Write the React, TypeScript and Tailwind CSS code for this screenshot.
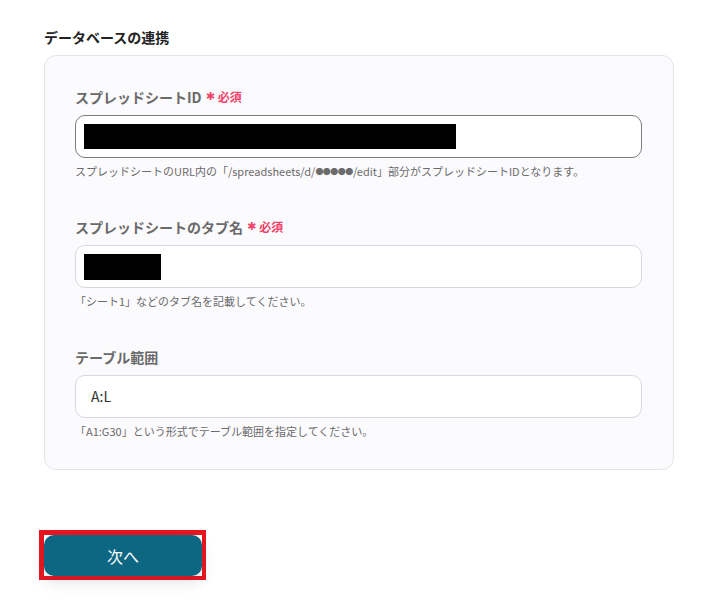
import React from "react";

const font = { fontFamily: '"Noto Sans CJK JP", "Noto Sans", sans-serif' };

function Label({ text, required }: { text: string; required?: boolean }) {
  return (
    <div className="flex items-center h-[20px] text-[14px] font-bold text-[#6a6a6a] leading-[20px]">
      <span>{text}</span>
      {required && (
        <span className="ml-[4px] flex items-center text-[12px] text-[#f0436a] font-bold">
          <span className="text-[11px] mr-[3px] leading-[20px] font-normal" style={{ fontFamily: '"DejaVu Sans", sans-serif' }}>✱</span>必須
        </span>
      )}
    </div>
  );
}

function Help({ children }: { children: React.ReactNode }) {
  return <div className="mt-[5px] h-[16px] overflow-visible text-[11px] leading-[16px] text-[#6b6b6b] whitespace-nowrap">{children}</div>;
}

export default function App() {
  return (
    <div className="w-[728px] h-[612px] bg-white relative" style={font}>
      <div className="pl-[44px] pt-[27px]">
        <div className="text-[14px] font-bold leading-[20px] text-[#222]">データベースの連携</div>
        <div className="mt-[8px] w-[630px] rounded-[12px] border border-[#e3e3ea] bg-[#fbfafd] pl-[30px] pr-[31px] pt-[31px] pb-[30px]">
          <Label text="スプレッドシートID" required />
          <div className="mt-[8px] h-[43px] rounded-[10px] border border-[#7c7c80] bg-white flex items-center pl-[8px]">
            <div className="w-[372px] h-[25px] bg-black" />
          </div>
          <Help>
            スプレッドシートのURL内の「/spreadsheets/d/
            <span className="text-[8px] leading-[0] tracking-[-0.5px] align-[1px]">●●●●●</span>
            /edit」部分がスプレッドシートIDとなります。
          </Help>

          <div className="mt-[38px]">
            <Label text="スプレッドシートのタブ名" required />
          </div>
          <div className="mt-[8px] h-[43px] rounded-[10px] border border-[#d8d8e0] bg-white flex items-center pl-[8px]">
            <div className="w-[77px] h-[26px] bg-black" />
          </div>
          <Help>「シート1」などのタブ名を記載してください。</Help>

          <div className="mt-[38px]">
            <Label text="テーブル範囲" />
          </div>
          <div className="mt-[8px] h-[43px] rounded-[10px] border border-[#d8d8e0] bg-white flex items-center pl-[15px] text-[14px] text-[#333]">
            A:L
          </div>
          <Help>「A1:G30」という形式でテーブル範囲を指定してください。</Help>
        </div>

        <div className="mt-[60px] ml-[-5px] inline-block align-top border-t-[5px] border-l-[5px] border-r-[4px] border-b-[4px] border-[#e8151f]">
          <button className="block w-[158px] h-[41px] rounded-[10px] bg-[#0d6782] text-white text-[16px] shadow-[0_6px_14px_rgba(60,60,90,0.15)]">
            次へ
          </button>
        </div>
      </div>
    </div>
  );
}
